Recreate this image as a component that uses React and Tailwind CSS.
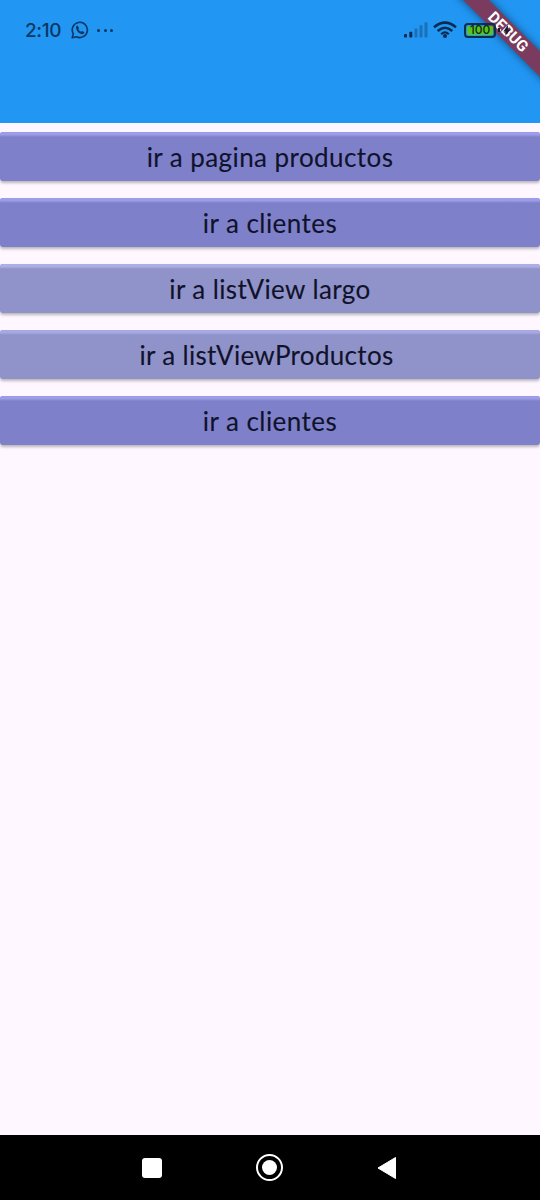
const actions = [
  { label: 'ir a pagina productos', tone: 'bg-[#7e81ca]', edge: 'from-[#9c9de6] to-[#7e81ca]', text: 'tracking-[0.43px]' },
  { label: 'ir a clientes', tone: 'bg-[#7e81ca]', edge: 'from-[#9c9de6] to-[#7e81ca]', text: 'tracking-[0.45px]' },
  { label: 'ir a listView largo', tone: 'bg-[#9093c9]', edge: 'from-[#adafe4] to-[#9093c9]', text: 'tracking-[0.4px]' },
  { label: 'ir a listViewProductos', tone: 'bg-[#9093c9]', edge: 'from-[#a6a9e3] to-[#9093c9]', text: 'tracking-[0.32px] pr-[7px]' },
  { label: 'ir a clientes', tone: 'bg-[#7e81ca]', edge: 'from-[#9c9de6] to-[#7e81ca]', text: 'tracking-[0.45px]' },
];

function WhatsAppIcon() {
  return (
    <svg className="ml-[9px] h-[18px] w-[18px]" viewBox="0 0 18 18" fill="none">
      <path d="M1.2 16.7 2.3 12.8A7.6 7.6 0 1 1 5.4 15.7Z" stroke="#0c3761" strokeWidth="1.6" strokeLinejoin="round" />
      <path d="M5.2 5.3 6.6 4.5 8 7.2 7.3 8.2Q8.2 9.9 10.1 10.8L11 9.9 13.5 11.3Q12.9 13.4 11 13.3C7.6 12.6 4.5 9.2 5.2 5.3Z" fill="#0c3761" />
    </svg>
  );
}

function SignalIcon() {
  return (
    <svg className="h-4 w-6" viewBox="0 0 24 16">
      <rect x="0" y="12" width="3" height="3.5" rx=".7" fill="#0a2b50" />
      <rect x="5.3" y="9.7" width="3" height="5.8" rx=".7" fill="#0a2b50" />
      <g fill="#1b70b8">
        <rect x="10.5" y="6.5" width="3" height="9" rx=".7" />
        <rect x="15.5" y="3.3" width="3" height="12.2" rx=".7" />
        <rect x="20.5" y="0.3" width="3" height="15.2" rx=".7" />
      </g>
    </svg>
  );
}

function WifiIcon() {
  return (
    <svg className="ml-[5px] h-[18px] w-6" viewBox="0 0 24 18" fill="none" stroke="#0a2b50" strokeWidth="2.5">
      <path d="M1 6.3Q12-3.1 23 6.3" />
      <path d="M4.7 10Q12 3.5 19.3 10" />
      <path d="M8.2 13.2Q12 9.5 15.8 13.2" strokeWidth="2.2" />
      <circle cx="12" cy="15" r="2" fill="#0a2b50" stroke="none" />
    </svg>
  );
}

function Battery() {
  return (
    <div className="ml-[7px] flex items-center">
      <div className="flex h-[15px] w-8 items-center justify-center rounded-[4px] border-2 border-[#0b2d4e] p-px">
        <div className="flex h-full w-full items-center justify-center rounded-[1.5px] bg-[#57c51d] text-[12px] leading-none font-medium text-[#102b1c]">100</div>
      </div>
      <div className="ml-[2px] h-1 w-[2px] bg-[#1c1826]" />
      <svg className="ml-[3px] h-[11px] w-2" viewBox="0 0 8 12"><path d="M5 0 0 7h3L2 12l6-7H5Z" fill="#201a28" /></svg>
    </div>
  );
}

export default function App() {
  return (
    <div className="relative flex h-[1200px] w-[540px] flex-col overflow-hidden bg-[#fef7ff] font-['Lato',sans-serif]">
      <header className="h-[123px] shrink-0 bg-[#2196f3] pt-[19px]">
        <div className="relative z-10 flex h-[22px] items-center font-['Inter',sans-serif]">
          <span className="ml-[25px] w-[37px] text-[19px] leading-none font-medium tracking-[-0.35px] text-[#0c3761]">2:10</span>
          <WhatsAppIcon />
          <div className="ml-[8px] flex gap-[3.5px]">
            <i className="h-[3px] w-[3px] rounded-full bg-[#0c3761]" />
            <i className="h-[3px] w-[3px] rounded-full bg-[#0c3761]" />
            <i className="h-[3px] w-[3px] rounded-full bg-[#0c3761]" />
          </div>
          <div className="ml-auto flex w-[136px] items-center">
            <SignalIcon />
            <WifiIcon />
            <Battery />
          </div>
        </div>
      </header>
      <main className="flex flex-1 flex-col gap-[17px] pt-[9px]">
        {actions.map((action, i) => (
          <button key={i} className={`flex h-[49px] w-full shrink-0 flex-col overflow-hidden rounded-[3px] shadow-[0_2px_3px_#00000045] ${action.tone}`}>
            <span className={`h-[5px] w-full shrink-0 bg-linear-to-b from-50% ${action.edge}`} />
            <span className={`flex w-full flex-1 items-center justify-center pb-[4px] text-[26px] leading-none whitespace-nowrap text-[#10122b] [-webkit-text-stroke:0.12px_#10122b] ${action.text}`}>{action.label}</span>
          </button>
        ))}
      </main>
      <nav className="flex h-[65px] shrink-0 items-center bg-black">
        <div className="ml-[142px] h-5 w-5 rounded-[3px] bg-white" />
        <div className="ml-[94px] flex h-[27px] w-[27px] items-center justify-center rounded-full border-2 border-white">
          <div className="h-[15px] w-[15px] rounded-full bg-white" />
        </div>
        <svg className="ml-[94px] h-6 w-5" viewBox="0 0 20 24"><path d="M1 12 18.5 1.5v21Z" fill="white" stroke="white" strokeLinejoin="round" /></svg>
      </nav>
      <div className="absolute top-[23px] left-[437.5px] flex h-[18px] w-[140px] rotate-45 items-center justify-center bg-[#942335c8] pt-[2px] font-['Roboto',sans-serif] text-[15.5px] leading-none font-bold text-white shadow-[0_0_8px_#0000007f]">
        DEBUG
      </div>
    </div>
  );
}
